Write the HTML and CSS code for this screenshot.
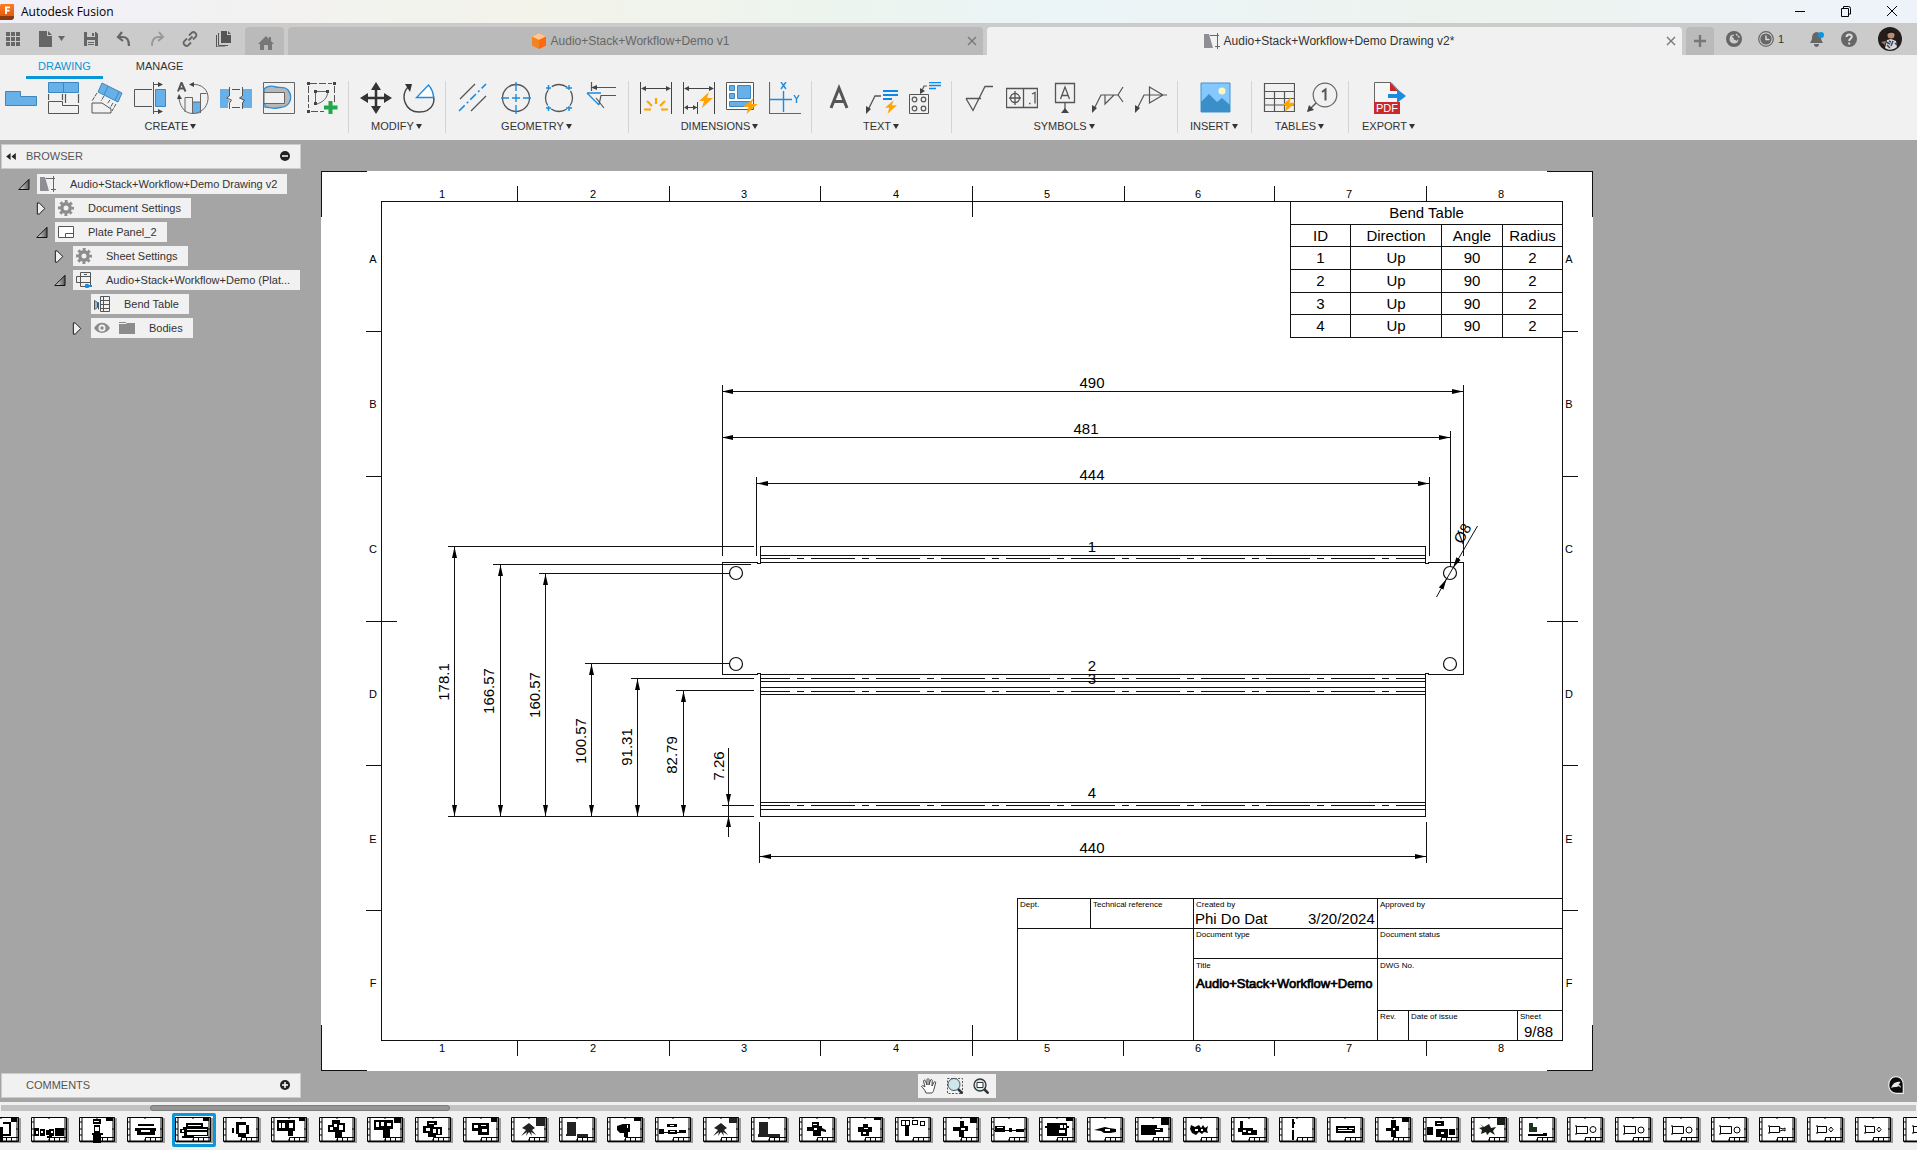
FILE: index.html
```html
<!DOCTYPE html>
<html lang="en">
<head>
<meta charset="utf-8">
<title>Autodesk Fusion</title>
<link rel="stylesheet" href="styles.css">
</head>
<body>
<svg class="defs" aria-hidden="true">
  <defs>
    <linearGradient id="tri" x1="0" y1="0" x2="1" y2="0"><stop offset="0" stop-color="#eee"/><stop offset="1" stop-color="#555"/></linearGradient>
    <linearGradient id="orange" x1="0" y1="0" x2="0" y2="1"><stop offset="0" stop-color="#ff7a1c"/><stop offset="1" stop-color="#d9540b"/></linearGradient>
    <marker id="arrow" viewBox="0 0 11 6" refX="11" refY="3" markerWidth="11" markerHeight="6" markerUnits="userSpaceOnUse" orient="auto-start-reverse"><path d="M11 3 0 .5v5z"/></marker>
    <symbol id="i-open" viewBox="0 0 12 12"><path d="M11 .8V11H.8z" fill="url(#tri)" stroke="#111"/></symbol>
    <symbol id="i-shut" viewBox="0 0 12 14"><path d="M1 1h2l6 6-6 6H1z" fill="#eee" stroke="#111"/></symbol>
    <symbol id="i-gear" viewBox="0 0 16 16"><circle cx="8" cy="8" r="4.200" fill="none" stroke="#8c8c8c" stroke-width="3.400"/><circle cx="8" cy="8" r="6.700" fill="none" stroke="#8c8c8c" stroke-width="2.600" stroke-dasharray="2.900 2.362" stroke-dashoffset="1.450"/></symbol>
    <symbol id="i-drawing" viewBox="0 0 16 16"><path d="M0 1h5l4 14H0z" fill="#8e8e93"/><path d="M6 2.500h9M13.500 0v16M11 13.500h5" fill="none" stroke="#666"/></symbol>
    <symbol id="i-bolt" viewBox="0 0 14 16"><path d="M10 0 0 9h5L3 16 14 6H8z" fill="#ffa400"/></symbol>
    <symbol id="frame" viewBox="0 0 38 26">
      <path fill="#9c9c9c" d="M1 1h37v25H1z"/><path fill="#fff" stroke="#000" d="M.5.5h35v24H.5z"/>
      <path fill="none" stroke="#000" d="M3 1v23M1 24h34M18 1v1M18 22v2M1 12h2M34 1v23M1 5h2M1 18h2M33 12h2M18.500 24v-3.500H35M23.500 21v3M28.500 21v3"/>
    </symbol>
  </defs>
</svg>

<header class="titlebar">
  <svg class="app-icon" viewBox="0 0 14 16"><path d="M1 0h13v14l-2 2H0V1z" fill="url(#orange)"/><path d="M0 12h14v2l-2 2H0z" fill="#8a3a10"/><path d="M5 2.500h5v1.700H7v1.600h2.500v1.600H7V10H5z" fill="#fff"/></svg>
  <h1>Autodesk Fusion</h1>
  <div class="window-controls">
    <button aria-label="Minimize"><svg viewBox="0 0 12 12"><path d="M1 6.500h10" stroke="#000"/></svg></button>
    <button aria-label="Restore"><svg viewBox="0 0 12 12"><path d="M3.500 3V1.500h5a2 2 0 0 1 2 2V9H9M1.500 3.500h7v8h-7z" fill="none" stroke="#000"/></svg></button>
    <button aria-label="Close"><svg viewBox="0 0 12 12"><path d="m1 1 10 10M11 1 1 11" stroke="#000"/></svg></button>
  </div>
</header>

<div class="tabbar">
  <div class="quick">
    <button aria-label="Data panel"><svg viewBox="0 0 16 16" fill="#666"><path d="M1 1h4v4H1zM6 1h4v4H6zM11 1h4v4h-4zM1 6h4v4H1zM6 6h4v4H6zM11 6h4v4h-4zM1 11h4v4H1zM6 11h4v4H6zM11 11h4v4h-4z"/></svg></button>
    <button class="file" aria-label="File"><svg viewBox="0 0 28 16" fill="#666"><path d="M1 0h8v5h5v11H1zM10 0l4 4h-4zM20 5h7l-3.500 5z"/></svg></button>
    <button aria-label="Save"><svg viewBox="0 0 16 16"><path fill="#666" fill-rule="evenodd" d="M1 1h12l2 2v12H1zM4 1v5h8V1zM4 9v6h8V9z"/><path fill="#666" d="M9 2h2v3H9zM5 11h6v1H5zM5 13h6v1H5z"/></svg></button>
    <button class="undo" aria-label="Undo"><svg viewBox="0 0 16 16"><path d="M6 1 2 6l5 4M2 6h5c5 0 6 4 6 9" fill="none" stroke="#666" stroke-width="2.200"/></svg></button>
    <button aria-label="Redo"><svg viewBox="0 0 16 16"><path d="m10 1 4 5-5 4M14 6H9c-5 0-6 4-6 9" fill="none" stroke="#999" stroke-width="2"/></svg></button>
    <button aria-label="Share"><svg viewBox="0 0 16 16"><path d="m6.500 9.500 4-4M7 4.500l3-3c2-1.500 5.500 1.500 4 4l-3 3M9 11.500l-3 3c-2 1.500-5.500-1.500-4-4l3-3" fill="none" stroke="#666" stroke-width="1.800"/></svg></button>
    <button aria-label="Copies"><svg viewBox="0 0 16 16"><path fill="#555" d="M6 0h6v4h4v8H6zM13 0l3 3h-3z"/><path d="M3.500 2v12.500H13M1.500 4v12H10" fill="none" stroke="#555"/></svg></button>
  </div>
  <button class="tab home" aria-label="Home"><svg viewBox="0 0 16 14"><path fill="#777" d="M8 0l3 3V1h2v4l3 3h-2v6h-4V9H6v5H2V8H0z"/></svg></button>
  <div class="tab">
    <button class="tab-label"><svg viewBox="0 0 16 16"><path d="m8 0 7 3.500v9L8 16l-7-3.500v-9z" fill="#f58220"/><path d="m8 0 7 3.500L8 7 1 3.500z" fill="#ffc592"/><path d="m8 7 7-3.500v9L8 16z" fill="#ff6a10"/></svg>Audio+Stack+Workflow+Demo v1</button>
    <button class="x" aria-label="Close tab"><svg viewBox="0 0 10 10"><path d="m1 1 8 8M9 1 1 9" stroke="#777" stroke-width="1.400"/></svg></button>
  </div>
  <div class="tab active">
    <button class="tab-label"><svg><use href="#i-drawing"/></svg>Audio+Stack+Workflow+Demo Drawing v2*</button>
    <button class="x" aria-label="Close tab"><svg viewBox="0 0 10 10"><path d="m1 1 8 8M9 1 1 9" stroke="#777" stroke-width="1.400"/></svg></button>
  </div>
  <button class="tab plus" aria-label="New tab"><svg viewBox="0 0 14 14"><path d="M7 1v12M1 7h12" stroke="#777" stroke-width="2.400"/></svg></button>
  <div class="account">
    <button aria-label="Extensions"><svg viewBox="0 0 16 16"><circle cx="8" cy="8" r="8" fill="#666"/><path d="M8 3.500a4.500 4.500 0 1 0 4.500 5L10 9 7.500 7z" fill="#ccc"/><path d="m8 8.500 4.500-4.500M6.500 5l4.500 4.500" stroke="#666" stroke-width="1.400"/><path d="m10 3 1.500 1.500M12 5l1.500 1.500" stroke="#ccc" stroke-width="1.500"/></svg></button>
    <button class="jobs" aria-label="Jobs"><svg viewBox="0 0 16 16"><circle cx="8" cy="8" r="7.300" fill="none" stroke="#666" stroke-width="1.200"/><circle cx="8" cy="8" r="5.600" fill="#666"/><path d="M8 4.500V8.500h3.500" fill="none" stroke="#ddd" stroke-width="1.400"/></svg>1</button>
    <button aria-label="Notifications"><svg viewBox="0 0 16 16"><path d="M7 1c4 0 5 3 5 6 0 2 1 3 2 5H1c1-2 2-3 2-5 0-3 1-5 4-6zM5 13h5c0 4-5 4-5 0z" fill="#666"/><circle cx="12" cy="4" r="3" fill="#0a96e0"/></svg></button>
    <button aria-label="Help"><svg viewBox="0 0 16 16"><circle cx="8" cy="8" r="8" fill="#666"/><path d="M5.500 6c0-3.500 5.500-3.300 5.300-.2C10.700 7.500 8.200 7.600 8.200 10M8.200 11.500v2" fill="none" stroke="#ddd" stroke-width="2"/></svg></button>
    <button class="avatar" aria-label="Profile"><svg viewBox="0 0 24 24"><circle cx="12" cy="12" r="12" fill="#241d1c"/><circle cx="13" cy="8" r="3.500" fill="#b98a76"/><path d="M9 7c0-4 8-4 8 0-3-2-5-1-8 0z" fill="#111"/><path d="m7 21 2-8 4-1 5 2 1 6c-4 3-8 4-12 1z" fill="#d5d9df"/><path d="m8 15 4 2m3-3-2 5m4-3 2 2m-10 0 3 3m-1-7 2 1" stroke="#445" stroke-width="1.500"/><path d="m3 15 5-1-1 4z" fill="#a87462"/></svg></button>
  </div>
</div>

<nav class="ribbon">
  <div class="modes"><button class="on">DRAWING</button><button>MANAGE</button></div>
  <div class="groups">
    <section class="group">
      <div class="tools">
        <button aria-label="Base view"><svg viewBox="0 0 32 32"><path d="M.5 9.500h15v5h16v9H.5z" fill="#68b0e8" stroke="#3f86bd"/></svg></button>
        <button aria-label="Projected view"><svg viewBox="0 0 32 32"><path d="M.5.500h30v10H.5zM15.500.500v10" fill="#68b0e8" stroke="#3f86bd"/><path d="M.5 12v6M30.500 12v11M14.500 12v6M17.500 12v10" fill="none" stroke="#555" stroke-width="1.200" stroke-dasharray="9 2"/><path d="M.5 19.500h14v4h16v8H.5z" fill="none" stroke="#555"/></svg></button>
        <button aria-label="Auxiliary view"><svg viewBox="0 0 32 32"><path d="m11 1 20 10-4 9L7 10zM17 4l-4 9M28 10l-4 8" fill="#68b0e8" stroke="#3f86bd"/><path d="M1 31V21h10l9 6v4z" fill="none" stroke="#555"/><path d="m6 11-5 8M13 14l-3 5M19 18l-3 4M25 22l-4 7M22 21l-3 5" fill="none" stroke="#555" stroke-dasharray="4 1"/></svg></button>
        <button aria-label="Section view"><svg viewBox="0 0 32 32"><path d="M21.500 7.500h10v17h-10z" fill="#68b0e8" stroke="#3f86bd"/><path d="M18 7.500H.5v17H18M19.500 0v32M19.500 2.500h6M19.500 29.500h6" fill="none" stroke="#555"/><path d="m24 0 5 2.500L24 5zM24 27l5 2.500-5 2.500z" fill="#444"/></svg></button>
        <button aria-label="Detail view"><svg viewBox="0 0 32 32"><path d="M15.500 20h8v11c-3 1-6 .5-8 0z" fill="#68b0e8"/><path d="M8 30V15.500h7.500V31M23.500 31V11.500h6M16 20h7M15 2.500c9-1 17 5 16 15-1 9-8 14-15 14S4 27 2 17" fill="none" stroke="#666"/><path d="m17 0-5 2.500L17 5zM0 17l2-5 3 5z" fill="#444"/><path d="M1 9.500 4.500.5l4 9M2.500 6.500h4.500" fill="none" stroke="#555" stroke-width="2"/></svg></button>
        <button aria-label="Break view"><svg viewBox="0 0 32 32"><path d="M0 7h9v7l-3 2 4 3-2 2v5H0zM32 7h-9v7l-3 2 4 3-2 2v5h10z" fill="#68b0e8"/><path d="M9.500 5v9l-3 2 5 2-2 3v6M22.500 5v9l-3 2 5 2-2 3v6M12 7.500h8M12 25.500h8" fill="none" stroke="#555"/></svg></button>
        <button aria-label="Breakout view"><svg viewBox="0 0 32 32"><path d="M.5.500h31v31H.5z" fill="none" stroke="#666"/><path d="M1 7c4-4 9-3 12-2s9-1 12 3 4 8 1 13-8 4-12 5-8-1-12-1z" fill="#b8b8b8" stroke="#2f8fd6" stroke-width="1.400"/><path d="M1 10.500h20.500v11H1z" fill="#f1f1f1" stroke="#666"/></svg></button>
        <button aria-label="Sketch"><svg viewBox="0 0 32 32"><path d="M4 1.500h22M2.500 4v22M28.500 4v16M5 29.500h13" fill="none" stroke="#555" stroke-dasharray="7 2"/><path d="M9.500 22V9.500H22C21 16 18 20 9.500 22.500" fill="none" stroke="#666"/><path d="M1 0h3v3H1zM27 0h3v3h-3zM1 28h3v3H1zM8 8h3v3H8zM20 8h3v3h-3zM8 20h3v3H8z" fill="#444"/><path d="M24.500 19v13M18 25.500h13.500" stroke="#20a84a" stroke-width="4"/></svg></button>
      </div>
      <button class="group-label">CREATE</button>
    </section>
    <section class="group">
      <div class="tools">
        <button aria-label="Move"><svg viewBox="0 0 32 32"><path d="M16 5v22M5 16h22" stroke="#333" stroke-width="2.500"/><path d="m16 0 5 8H11zM16 32l5-8H11zM0 16l8-5v10zM32 16l-8-5v10z" fill="#333"/></svg></button>
        <button aria-label="Rotate"><svg viewBox="0 0 32 32"><path d="M5 5C-3 14 2 30 16 30s19-12 11-22" fill="none" stroke="#444" stroke-width="1.400"/><path d="M2 2h7L7 10z" fill="#333"/><path d="m25.500 3-12 12.500H30.500c0-4-2-9-5-12.500z" fill="#fff" stroke="#1b8be0" stroke-width="1.300"/></svg></button>
      </div>
      <button class="group-label">MODIFY</button>
    </section>
    <section class="group">
      <div class="tools">
        <button aria-label="Centerline"><svg viewBox="0 0 32 32"><path d="M3 17 18 2M14 29l15-15" stroke="#555" stroke-width="1.300"/><path d="M2 29 29 2" stroke="#1b8be0" stroke-width="1.600" stroke-dasharray="8 3 2 3"/></svg></button>
        <button aria-label="Center mark"><svg viewBox="0 0 32 32"><circle cx="16" cy="16" r="13.500" fill="none" stroke="#555" stroke-width="1.300"/><path d="M16 0v9M16 12v8M16 23v9M1 16h8M12 16h8M23 16h8" stroke="#1b8be0" stroke-width="1.400"/></svg></button>
        <button aria-label="Center mark pattern"><svg viewBox="0 0 32 32"><circle cx="16" cy="16" r="13.500" fill="none" stroke="#555" stroke-width="1.300" stroke-dasharray="16.200 5" stroke-dashoffset="8"/><path d="M3 6h5M5.500 3v5M23 6h6M26 3v5M3 26h5M5.500 24v5M23 26h6M26 24v5" stroke="#1b8be0" stroke-width="1.400"/></svg></button>
        <button aria-label="Edge extension"><svg viewBox="0 0 32 32"><path d="M5.500 0v9M6 5.500h24M30 13.500H15l-2 9M10 16l8 10" fill="none" stroke="#555" stroke-width="1.200"/><path d="M11 3v5L5 5.500z" fill="#444"/><path d="M1 11h14M1 11l12 12" stroke="#1b8be0" stroke-width="1.400"/></svg></button>
      </div>
      <button class="group-label">GEOMETRY</button>
    </section>
    <section class="group">
      <div class="tools">
        <button aria-label="Dimension"><svg viewBox="0 0 32 32"><path d="M.5 0v32M31.500 0v32M2 6.500h28" stroke="#444"/><path d="M6 4v5L1 6.500zM26 4v5l5-2.500z" fill="#444"/><path d="M4 27.500h7M21 27.500h7M16 16v6M7 19l5 5M25 19l-5 5" stroke="#ffa400" stroke-width="2.200"/></svg></button>
        <button aria-label="Auto dimension"><svg viewBox="0 0 32 32"><path d="M.5 0v32M31.500 0v32M2 6.500h28M14.500 20v12M2 25.500h12" stroke="#444"/><path d="M6 4v5L1 6.500zM26 4v5l5-2.500zM5 23v5l-4-2.500zM10 23v5l4-2.500z" fill="#444"/><use href="#i-bolt" x="16" y="10" width="14" height="16"/></svg></button>
        <button aria-label="Arrange dimensions"><svg viewBox="0 0 32 32"><path d="M.5.500h27v27H.5z" fill="#fff" stroke="#555"/><path d="M3.500 3.500h5v5h-5zM11.500 3.500h13v13h-13zM3.500 11.500h5v5h-5zM3.500 19.500h21v5h-21z" fill="#68b0e8" stroke="#3f86bd"/><use href="#i-bolt" x="17" y="16" width="15" height="16"/></svg></button>
        <button aria-label="Ordinate"><svg viewBox="0 0 32 32"><path d="M.5 0v31.500H32" fill="none" stroke="#666" stroke-width="1.200"/><path d="M14.500 9v21M1 17.500h22M12 0l5 7M17 0l-5 7M25 13l2.500 4 2.500-4M27.500 17v4" fill="none" stroke="#1b8be0" stroke-width="1.400"/></svg></button>
      </div>
      <button class="group-label">DIMENSIONS</button>
    </section>
    <section class="group">
      <div class="tools">
        <button aria-label="Text"><svg viewBox="0 0 32 32"><path d="m8 26 8-20 8 20M11 19.500h10" fill="none" stroke="#555" stroke-width="3"/></svg></button>
        <button aria-label="Leader"><svg viewBox="0 0 32 32"><path d="m1 30 8-16h6" fill="none" stroke="#555" stroke-width="1.300"/><path d="M0 32v-8l5 3z" fill="#444"/><path d="M17 9h15M17 13h15M17 17h9" stroke="#0a8ae6" stroke-width="2"/><use href="#i-bolt" x="19" y="18" width="12" height="14"/></svg></button>
        <button aria-label="Hole note"><svg viewBox="0 0 32 32"><path d="M.5 12.500h19v19H.5z" fill="none" stroke="#555"/><g fill="none" stroke="#555" stroke-width="1.200"><circle cx="5.500" cy="17.500" r="2.300"/><circle cx="14.500" cy="17.500" r="2.300"/><circle cx="5.500" cy="26.500" r="2.300"/><circle cx="14.500" cy="26.500" r="2.300"/><path d="M12 11l3-7h3"/></g><path d="M11 12V6l5 3z" fill="#444"/><path d="M20 .7h12M20 3.500h12M20 6.500h7" stroke="#0a8ae6" stroke-width="1.300"/></svg></button>
      </div>
      <button class="group-label">TEXT</button>
    </section>
    <section class="group">
      <div class="tools">
        <button aria-label="Surface texture"><svg viewBox="0 0 32 32"><path d="M3 16.500h15M3 16.500l7 12L22 4.500h8" fill="none" stroke="#555" stroke-width="1.300"/></svg></button>
        <button aria-label="Feature control frame"><svg viewBox="0 0 32 32"><path d="M.5 6.500h31v19H.5zM17.500 6.500v19M9 9v14M3 16h12M23 21.500h1.500M26 12l3-1.500v11" fill="none" stroke="#555" stroke-width="1.300"/><circle cx="9" cy="16" r="4.500" fill="none" stroke="#555" stroke-width="1.300"/></svg></button>
        <button aria-label="Datum"><svg viewBox="0 0 32 32"><path d="M6.500 1.500h19v19h-19zM16 21v8M11.500 17 16 5l4.500 12M13 13.500h6" fill="none" stroke="#555" stroke-width="1.300"/><path d="m16 26 4 5h-8z" fill="#444"/></svg></button>
        <button aria-label="Welding"><svg viewBox="0 0 32 32"><path d="m1 29 8-16h18M13 13v9l9-9M31 5l-5 8 5 7" fill="none" stroke="#555" stroke-width="1.200"/><path d="M0 31v-8l5 3z" fill="#444"/></svg></button>
        <button aria-label="Taper"><svg viewBox="0 0 32 32"><path d="m1 29 8-16h23M14.500 5v16L28 13z" fill="none" stroke="#555" stroke-width="1.200"/><path d="M0 31v-8l5 3z" fill="#444"/></svg></button>
      </div>
      <button class="group-label">SYMBOLS</button>
    </section>
    <section class="group">
      <div class="tools">
        <button aria-label="Insert image"><svg viewBox="0 0 32 32"><path d="M2 1h29v29H2z" fill="#84c8ff" stroke="#3f93cf"/><path d="m2 20 8-8 8 8 5-4 8 7v7H2z" fill="#3a8fc9"/><circle cx="23" cy="9" r="3.500" fill="#fff5b8"/></svg></button>
      </div>
      <button class="group-label">INSERT</button>
    </section>
    <section class="group">
      <div class="tools">
        <button aria-label="Table"><svg viewBox="0 0 32 32"><path d="M1.500 1.500h30v28h-30zM1.500 9.500h30M1.500 16.500h30M1.500 23h30M11.500 9.500v20M21.500 9.500v20" fill="none" stroke="#555" stroke-width="1.200"/><use href="#i-bolt" x="19" y="15" width="13" height="15"/></svg></button>
        <button aria-label="Balloon"><svg viewBox="0 0 32 32"><circle cx="19" cy="13" r="11.800" fill="none" stroke="#666" stroke-width="1.200"/><path d="m16 10 3.500-2.500v11" fill="none" stroke="#555" stroke-width="2"/><path d="m10 21-8 8" stroke="#555" stroke-width="1.400"/><path d="m1 30 2-7 5 5z" fill="#444"/></svg></button>
      </div>
      <button class="group-label">TABLES</button>
    </section>
    <section class="group">
      <div class="tools">
        <button aria-label="Export PDF"><svg viewBox="0 0 32 32"><path d="M.5.500H17L24 8v13H.5z" fill="#f6f6f6" stroke="#666"/><path d="m16 0 8 9h-8z" fill="#c9282d"/><path d="M0 20h26v12H0z" fill="#c9282d"/><path d="M14 12h9V7l9 7-9 7v-5h-9z" fill="#1b8be0"/><text x="13" y="30" class="pdf">PDF</text></svg></button>
      </div>
      <button class="group-label">EXPORT</button>
    </section>
  </div>
</nav>

<main class="stage">
  <aside class="browser">
    <div class="panel">
      <svg class="rewind" viewBox="0 0 11 8"><path d="M5 0v8L0 4zM11 0v8L6 4z" fill="#222"/></svg>
      <h2>BROWSER</h2>
      <button aria-label="Collapse"><svg viewBox="0 0 10 10"><circle cx="5" cy="5" r="5" fill="#222"/><path d="M2 5h6" stroke="#fff" stroke-width="1.500"/></svg></button>
    </div>
    <ul class="tree">
      <li><div class="row"><svg class="twist"><use href="#i-open"/></svg><a href="#"><svg><use href="#i-drawing"/></svg>Audio+Stack+Workflow+Demo Drawing v2</a></div>
        <ul>
          <li><div class="row"><svg class="twist"><use href="#i-shut"/></svg><a href="#"><svg><use href="#i-gear"/></svg>Document Settings</a></div></li>
          <li><div class="row"><svg class="twist"><use href="#i-open"/></svg><a href="#"><svg viewBox="0 0 16 16"><path d="M.5 2.500h15v11H.5zM7.500 13.500v-4h8" fill="#fff" stroke="#555"/></svg>Plate Panel_2</a></div>
            <ul>
              <li><div class="row"><svg class="twist"><use href="#i-shut"/></svg><a href="#"><svg><use href="#i-gear"/></svg>Sheet Settings</a></div></li>
              <li><div class="row"><svg class="twist"><use href="#i-open"/></svg><a href="#"><svg viewBox="0 0 16 16"><path d="M4.500.500h10v14h-10zM.500 4.500h14M.500 4.500v6h14M8 2.500h3" fill="none" stroke="#555"/><circle cx="11" cy="14" r="2.300" fill="#1b8be0"/><path d="M11 14h5" stroke="#1b8be0" stroke-width="2"/></svg>Audio+Stack+Workflow+Demo (Plat...</a></div>
                <ul>
                  <li><div class="row"><a href="#"><svg viewBox="0 0 16 16"><path d="M6.500.500h9v15h-9zM6.500 4.500h9M6.500 8.500h9M6.500 12.500h9M9.500 1v15M.500 4.500v9l3-2v-5zM3.500 6.500h1v7" fill="none" stroke="#555"/><path d="M2 6v6" stroke="#1b8be0"/></svg>Bend Table</a></div></li>
                  <li><div class="row"><svg class="twist"><use href="#i-shut"/></svg><a href="#"><svg class="eye" viewBox="0 0 16 16"><path fill="#8c8c8c" fill-rule="evenodd" d="M0 8c4-7 12-7 16 0-4 6.500-12 6.500-16 0zM8 4.500a3.500 3.500 0 1 0 0 7 3.500 3.500 0 0 0 0-7z"/><circle cx="8" cy="8" r="1.700" fill="#8c8c8c"/></svg><svg viewBox="0 0 16 16"><path d="M0 2h7v1H0zM0 4h7l1-1h8v11H0z" fill="#8c8c8c"/></svg>Bodies</a></div></li>
                </ul>
              </li>
            </ul>
          </li>
        </ul>
      </li>
    </ul>
  </aside>

  <svg class="sheet" viewBox="321 171 1272 900">
    <path class="ln" d="M321.500 217v-45.500H367M1547 171.500h45.500V217M1592.500 1025v45.500H1547M367 1070.500h-45.500V1025"/>
    <path class="ln" d="M381.500 201.500h1181v839h-1181zM517.500 186v15M669.500 186v15M820.500 186v15M972.500 186v31M1124.500 186v15M1274.500 186v15M1426.500 186v15M517.500 1041v15M669.500 1041v15M820.500 1041v15M972.500 1025v31M1123.500 1041v15M1274.500 1041v15M1426.500 1041v15M366 331.500h15M366 476.500h15M366 621.500h31M366 765.500h15M366 910.500h15M1563 331.500h15M1563 476.500h15M1547 621.500h31M1563 765.500h15M1563 910.500h15"/>
    <g class="zone">
      <text x="442" y="198">1</text><text x="593" y="198">2</text><text x="744" y="198">3</text><text x="896" y="198">4</text><text x="1047" y="198">5</text><text x="1198" y="198">6</text><text x="1349" y="198">7</text><text x="1501" y="198">8</text>
      <text x="442" y="1052">1</text><text x="593" y="1052">2</text><text x="744" y="1052">3</text><text x="896" y="1052">4</text><text x="1047" y="1052">5</text><text x="1198" y="1052">6</text><text x="1349" y="1052">7</text><text x="1501" y="1052">8</text>
      <text x="373" y="263">A</text><text x="373" y="408">B</text><text x="373" y="553">C</text><text x="373" y="698">D</text><text x="373" y="843">E</text><text x="373" y="987">F</text>
      <text x="1569" y="263">A</text><text x="1569" y="408">B</text><text x="1569" y="553">C</text><text x="1569" y="698">D</text><text x="1569" y="843">E</text><text x="1569" y="987">F</text>
    </g>

    <!-- flat pattern outline and bend edges -->
    <path class="ln" d="M722.500 562.500h35v1h3v-17h665v17h3v-1h35v112h-35v-1h-3v143h-665v-143h-3v1h-35zM760 555.500h665M760 562.500h665M760 674.500h665M760 681.500h665M760 687.500h665M760 694.500h665M760 802.500h665M760 809.500h665"/>
    <path class="ln bend" d="M760 558.500h665M760 678.500h665M760 691.500h665M760 805.500h665"/>
    <g class="hole"><circle cx="736" cy="573" r="6.500"/><circle cx="736" cy="664" r="6.500"/><circle cx="1450" cy="573" r="6.500"/><circle cx="1450" cy="664" r="6.500"/></g>

    <!-- extension lines -->
    <path class="ln" d="M448 546.500h306M493 564.500h258M539 573.500h190M585 663.500h144M631 678.500h123M676 690.500h78M722 805.500h32M448 816.500h306M722.500 385v171M1463.500 385v171M1450.500 431v136M756.500 477v79M1429.500 477v79M759.500 822v41M1426.500 822v41"/>
    <!-- dimension lines -->
    <g class="dim">
      <path d="M454.500 547v269"/><path d="M500.500 565v251"/><path d="M545.500 574v242"/><path d="M591.500 664v152"/><path d="M637.500 679v137"/><path d="M683.500 691v125"/>
      <path class="in" d="M728.500 748v57"/><path class="in" d="M728.500 837v-21"/>
      <path d="M722 391.500h741"/><path d="M722 437.500h728"/><path d="M757 483.500h672"/><path d="M760 856.500h666"/>
      <path class="in" d="m1477.500 526-24.500 42"/><path class="in" d="m1436.500 597 10-18"/>
    </g>
    <path class="thin" d="m1453 568-7 12M728.500 805v11"/>
    <g class="num">
      <text x="1092" y="388">490</text><text x="1086" y="434">481</text><text x="1092" y="480">444</text><text x="1092" y="853">440</text>
      <text x="1092" y="552">1</text><text x="1092" y="671">2</text><text x="1092" y="684">3</text><text x="1092" y="798">4</text>
      <text transform="translate(449 682) rotate(-90)">178.1</text><text transform="translate(494 691) rotate(-90)">166.57</text><text transform="translate(540 695) rotate(-90)">160.57</text><text transform="translate(586 741) rotate(-90)">100.57</text><text transform="translate(632 747) rotate(-90)">91.31</text><text transform="translate(677 755) rotate(-90)">82.79</text><text transform="translate(724 766) rotate(-90)">7.26</text>
      <text transform="translate(1467 536) rotate(-60)">Ø8</text>
    </g>

    <foreignObject x="1290" y="201" width="274" height="140">
      <table class="bend-table">
        <colgroup><col class="c-id"><col class="c-dir"><col class="c-ang"><col class="c-rad"></colgroup>
        <thead>
          <tr><th colspan="4">Bend Table</th></tr>
          <tr><th>ID</th><th>Direction</th><th>Angle</th><th>Radius</th></tr>
        </thead>
        <tbody>
          <tr><td>1</td><td>Up</td><td>90</td><td>2</td></tr>
          <tr><td>2</td><td>Up</td><td>90</td><td>2</td></tr>
          <tr><td>3</td><td>Up</td><td>90</td><td>2</td></tr>
          <tr><td>4</td><td>Up</td><td>90</td><td>2</td></tr>
        </tbody>
      </table>
    </foreignObject>

    <!-- title block -->
    <path class="ln" d="M1017.500 1040v-141.500h545M1017 928.500h545M1193 958.500h369M1377 1010.500h185M1090.500 899v29M1193.500 899v141M1377.500 899v141M1408.500 1011v29M1517.500 1011v29"/>
    <g class="cap">
      <text x="1020" y="907">Dept.</text><text x="1093" y="907">Technical reference</text><text x="1196" y="907">Created by</text><text x="1380" y="907">Approved by</text>
      <text x="1196" y="937">Document type</text><text x="1380" y="937">Document status</text><text x="1196" y="968">Title</text><text x="1380" y="968">DWG No.</text>
      <text x="1380" y="1019">Rev.</text><text x="1411" y="1019">Date of issue</text><text x="1520" y="1019">Sheet</text>
    </g>
    <g class="val">
      <text x="1195" y="924">Phi Do Dat</text><text x="1308" y="924">3/20/2024</text><text x="1524" y="1037">9/88</text>
      <text x="1196" y="988" class="name">Audio+Stack+Workflow+Demo</text>
    </g>
  </svg>

  <div class="panel comments">
    <h2>COMMENTS</h2>
    <button aria-label="Expand comments"><svg viewBox="0 0 10 10"><circle cx="5" cy="5" r="5" fill="#222"/><path d="M2 5h6M5 2v6" stroke="#fff" stroke-width="1.500"/></svg></button>
  </div>
  <div class="viewbar">
    <button aria-label="Pan"><svg viewBox="0 0 16 16"><path d="M5 15c-1-3-3-5-4.500-6.500C1 7 3 8 4 9L2.500 3c.5-1.500 1.500-1 2 0L6 7V1.500c.5-1.200 1.700-1 2 0V7l1.500-5c.7-1 1.700-.5 1.700.5L11 8l2-4c1-.8 2 0 1.600 1L13 11c-.3 2-1 3-2 4z" fill="#fff" stroke="#333" stroke-width=".9"/></svg></button>
    <button aria-label="Zoom window"><svg viewBox="0 0 16 16"><path d="M.500.500h15v15H.500z" fill="none" stroke="#555" stroke-dasharray="2 1.500"/><circle cx="7" cy="6.500" r="6" fill="#cfe6ea" stroke="#456"/><path d="m11 11 4.500 4.500" stroke="#333" stroke-width="2.500"/></svg></button>
    <button aria-label="Fit"><svg viewBox="0 0 16 16"><circle cx="7" cy="7" r="6" fill="#cfe6ea" stroke="#333" stroke-width="1.300"/><path d="M4 4.500h6v5H4z" fill="#fff" stroke="#333"/><path d="m11 11 4.500 4.500" stroke="#333" stroke-width="2.500"/></svg></button>
  </div>
  <button class="badge" aria-label="Assistant"><svg viewBox="0 0 16 18"><path d="M8 .700c5 0 7.300 4 7.300 8v8.600H8C3 17.300.700 13 .700 9S3 .700 8 .700z" fill="#0a0a0a" stroke="#eee" stroke-width="1.200"/><path d="M3 12c2-5 5-7 9.500-6l-2 3c2 0 2.500 1 2 3-1-2-2-2-4-1-2 0-4 0-5.500 1z" fill="#e8e8e8"/></svg></button>
</main>

<footer class="sheets">
  <div class="track"><div class="grip"></div></div>
  <div class="strip">
    <button><svg viewBox="0 0 38 26"><use href="#frame"/><path d="M20 5h8v2h-8zM26 5h2v14H16v-2h10zM28 1h6v4h-6zM16 10h4v14h-4z"/></svg></button>
    <button><svg viewBox="0 0 38 26"><use href="#frame"/><path d="M3 11h5v8H3zM9 12h5v7H9zM15 13h4v5h-4zM18 12h5v7h-5zM24 11h9v8h-9zM16 19h5v2h-5z"/><path d="M5 14h2v3H5zM10 14h2v2h-2zM20 14h2v2h-2z" fill="#fff"/></svg></button>
    <button><svg viewBox="0 0 38 26"><use href="#frame"/><path d="M14 2h8v5h-8zM15 8h6v8h-6zM13 16h11v2H13zM14 17h8v9h-8zM27 1h7v3h-7z"/><path d="M16 10h4v4h-4zM15 4h5v1h-5z" fill="#fff"/></svg></button>
    <button><svg viewBox="0 0 38 26"><use href="#frame"/><path d="M11 7h16v2H11zM8 11h21v3H8zM10 14h18v4H10z"/><path d="M14 13h9v2h-9z" fill="#fff"/></svg></button>
    <button class="current"><svg viewBox="0 0 38 26"><use href="#frame"/><path d="M11 6h17v4h5v9H9v-3H5v-4h3v-2h3zM28 1h6v3h-6zM7 19h12v2H7z"/><path d="M12 12h20v1H12zM12 15h20v3H12zM7 13h2v2H7zM13 8h13v1H13z" fill="#fff"/></svg></button>
    <button><svg viewBox="0 0 38 26"><use href="#frame"/><path d="M13 5h10v3h3v9h-3v3h-8v-3h-2zM9 11h2v5H9z"/><path d="M16 8h7v8h-7z" fill="#fff"/></svg></button>
    <button><svg viewBox="0 0 38 26"><use href="#frame"/><path d="M6 3h18v11h-2v5h-5v-5H6zM28 1h6v3h-6z"/><path d="M8 6h2v5H8zM11 6h3v5h-3zM18 6h4v5h-4z" fill="#fff"/></svg></button>
    <button><svg viewBox="0 0 38 26"><use href="#frame"/><path d="M13 3h8v3h5v9h-3v6h-7v-6H9V8h4z"/><path d="M15 7h3v3h-3zM20 8h4v5h-4zM11 10h3v3h-3z" fill="#fff"/></svg></button>
    <button><svg viewBox="0 0 38 26"><use href="#frame"/><path d="M7 3h19v9h-3v9h-7v-8H7zM27 1h7v5h-7z"/><path d="M9 5h3v5H9zM14 5h3v4h-3zM20 6h4v3h-4z" fill="#fff"/></svg></button>
    <button><svg viewBox="0 0 38 26"><use href="#frame"/><path d="M12 4h10v4h-3v2h8v8h-6v2h-8v-4H8V9h4z"/><path d="M14 6h5v1h-5zM11 11h4v3h-4zM18 12h3v4h-3zM23 12h2v5h-2z" fill="#fff"/></svg></button>
    <button><svg viewBox="0 0 38 26"><use href="#frame"/><path d="M9 6h17v12H15v-4H9zM28 1h6v4h-6z"/><path d="M11 8h4v3h-4zM18 8h5v1h-5zM19 12h5v3h-5z" fill="#fff"/></svg></button>
    <button><svg viewBox="0 0 38 26"><use href="#frame"/><path d="m18 6 6 5-3 2 4 5-5-3 1 4-3-4-3 4 1-4-6 4 5-6-4-2zM25 1h9v8h-9z" fill="#222"/></svg></button>
    <button><svg viewBox="0 0 38 26"><use href="#frame"/><path d="M8 5h9v12H8zM7 17h10v2H7zM18 17h11v3H18z" fill="#222"/></svg></button>
    <button><svg viewBox="0 0 38 26"><use href="#frame"/><path d="m10 9 6-2h7v8h-2v5h-4v-4h-4l-3-3zM27 1h7v3h-7z"/><path d="M20 8h1v3h-1z" fill="#fff"/></svg></button>
    <button><svg viewBox="0 0 38 26"><use href="#frame"/><path d="M4 12h5v5H4zM12 7h10v3H12zM13 13h9v4h-9zM9 15h16v1H9zM24 13h7v3h-7z"/><path d="M15 8h4v1h-4zM15 14h5v1h-5z" fill="#fff"/></svg></button>
    <button><svg viewBox="0 0 38 26"><use href="#frame"/><path d="m18 6 6 5-3 2 4 5-5-3 1 4-3-4-3 4 1-4-6 4 5-6-4-2zM26 1h8v5h-8z" fill="#222"/></svg></button>
    <button><svg viewBox="0 0 38 26"><use href="#frame"/><path d="M8 5h9v12H8zM7 17h22v3H7z" fill="#222"/></svg></button>
    <button><svg viewBox="0 0 38 26"><use href="#frame"/><path d="M13 5h7v4h3v2l4 2v2l-5-1v5h-8v-5H8v-4h5z"/><path d="M15 11h3v2h-3zM14 7h4v1h-4z" fill="#fff"/></svg></button>
    <button><svg viewBox="0 0 38 26"><use href="#frame"/><path d="M16 7h5v3h4v5h-3v4h-8v-4h-3v-5h5zM27 1h7v2h-7z"/><path d="M17 11h4v1h-4zM16 15h3v2h-3z" fill="#fff"/></svg></button>
    <button><svg viewBox="0 0 38 26"><use href="#frame"/><path d="M6 3h9v6h-1v10h-4V9H6zM17 3h6v5h-6zM25 4h5v5h-5z"/><path d="M7 4h3v4H7zM11 4h3v4h-3zM18 4h4v3h-4zM26 5h3v3h-3z" fill="#fff"/></svg></button>
    <button><svg viewBox="0 0 38 26"><use href="#frame"/><path d="M17 4h4v5h4v5h-4v6h-5v-6h-6v-4h7zM27 1h7v5h-7z"/><path d="M18 11h4v2h-4z" fill="#fff"/></svg></button>
    <button><svg viewBox="0 0 38 26"><use href="#frame"/><path d="M4 9h10v6H4zM3 13h30v1H3zM18 11h3v4h-3zM25 12h8v3h-8z"/><path d="M6 10h6v1H6z" fill="#fff"/></svg></button>
    <button><svg viewBox="0 0 38 26"><use href="#frame"/><path d="M8 6h20v13H8zM6 9h24v2H6zM27 1h7v3h-7z"/><path d="M21 8h3v3h-3zM20 13h6v3h-6zM25 8h2v3h-2z" fill="#fff"/></svg></button>
    <button><svg viewBox="0 0 38 26"><use href="#frame"/><path d="m7 13 7-2 4-1 4 1 7 1v3l-6 1h-6l-3-2z"/><path d="M18 12h5v2h-5z" fill="#fff"/></svg></button>
    <button><svg viewBox="0 0 38 26"><use href="#frame"/><path d="M6 8h16v3h6v4h-7v3H6zM26 1h8v7h-8z"/><path d="M20 12h5v1h-5z" fill="#fff"/></svg></button>
    <button><svg viewBox="0 0 38 26"><use href="#frame"/><path d="m8 8 4 2 4-2 2 3 2-3 2 3 3-2-1 4 1 3-4-1-2 2-3-2-3 3-4-2-2-4z"/><path d="M12 12h3v2h-3zM18 12h2v2h-2z" fill="#fff"/></svg></button>
    <button><svg viewBox="0 0 38 26"><use href="#frame"/><path d="M9 4h3v7h10v2h4v5H11v-3H7v-4h2z"/><path d="M12 13h3v2h-3zM17 14h3v2h-3z" fill="#fff"/></svg></button>
    <button><svg viewBox="0 0 38 26"><use href="#frame"/><path d="M13 2h2v9h-2zM13 13h2v10h-2zM14 5h2v2h-2z"/></svg></button>
    <button><svg viewBox="0 0 38 26"><use href="#frame"/><path d="M9 9h19v7H9z"/><path d="M11 11h9v1h-9zM11 13h14v1H11zM22 11h5v1h-5z" fill="#fff"/></svg></button>
    <button><svg viewBox="0 0 38 26"><use href="#frame"/><path d="M16 3h5v6h3v5h-3v6h-5v-6h-5v-3h5zM27 1h7v4h-7z"/><path d="M18 11h2v2h-2z" fill="#fff"/></svg></button>
    <button><svg viewBox="0 0 38 26"><use href="#frame"/><path d="M12 4h9v5h-9zM4 10h6v8H4zM13 12h12v8H13zM26 12h6v6h-6z"/><path d="M14 6h4v1h-4zM18 15h3v2h-3z" fill="#fff"/></svg></button>
    <button><svg viewBox="0 0 38 26"><use href="#frame"/><path d="m9 7 4 3 5-3 2 4 5-1-3 4 2 4-5-3-3 3-1-3-5 2 1-4-3-2 4-1zM26 1h8v7h-8z" fill="#182018"/></svg></button>
    <button><svg viewBox="0 0 38 26"><use href="#frame"/><path d="M10 6h4v4h4v5h-8z" fill="#1c331d"/><path d="M9 17h15v-1h4v3H9z"/></svg></button>
    <button><svg viewBox="0 0 38 26"><use href="#frame"/><g class="o"><path d="M9.500 9.500h11v7h-11zM8 9h2M8 17h2"/><circle cx="26" cy="12.500" r="3"/></g></svg></button>
    <button><svg viewBox="0 0 38 26"><use href="#frame"/><g class="o"><path d="M9.500 9.500h11v7h-11zM8 9h2M8 17h2"/><circle cx="26" cy="13" r="3"/></g></svg></button>
    <button><svg viewBox="0 0 38 26"><use href="#frame"/><g class="o"><path d="M9.500 9.500h11v7h-11zM8 9h2M8 17h2"/><circle cx="26" cy="13" r="3"/></g></svg></button>
    <button><svg viewBox="0 0 38 26"><use href="#frame"/><g class="o"><path d="M9.500 9.500h11v7h-11zM8 9h2M8 17h2"/><circle cx="26" cy="13" r="3"/></g></svg></button>
    <button><svg viewBox="0 0 38 26"><use href="#frame"/><g class="o"><path d="M10.500 9.500h10v6h-10zM9 9h2M9 16h2M21 11l3 1 2-1v3l-2-1-3 1"/></g></svg></button>
    <button><svg viewBox="0 0 38 26"><use href="#frame"/><g class="o"><path d="M10.500 9.500h9v6h-9zM9 9h2M9 16h2M24 10l2 2.500-2 2.500-2-2.500z"/></g></svg></button>
    <button><svg viewBox="0 0 38 26"><use href="#frame"/><g class="o"><path d="M10.500 9.500h9v6h-9zM9 9h2M9 16h2M24 10l2 2.500-2 2.500-2-2.500z"/></g></svg></button>
    <button><svg viewBox="0 0 38 26"><use href="#frame"/><g class="o"><path d="M10.500 9.500h9v6h-9zM9 9h2M9 16h2M24 10l2 2.500-2 2.500-2-2.500z"/></g></svg></button>
  </div>
</footer>
</body>
</html>
```
FILE: styles.css
```css
* { box-sizing: border-box; }
body {
  margin: 0;
  min-height: 100vh;
  display: flex;
  flex-direction: column;
  overflow: hidden;
  background: #f1f1f1;
  color: #333;
  font: 11px/14px "Liberation Sans", Arial, sans-serif;
}
button {
  margin: 0;
  padding: 0;
  border: 0;
  background: none;
  color: inherit;
  font: inherit;
}
svg { display: block; flex: none; }
h1, h2 { margin: 0; font-weight: normal; }
ul { margin: 0; padding: 0; list-style: none; }
.defs { position: absolute; width: 0; height: 0; }

/* Title bar */
.titlebar {
  display: flex;
  align-items: center;
  height: 23px;
  background: linear-gradient(90deg, #f1f0f8, #f3f3ea 28%, #edf4ee 42%, #ebf4f7 56%, #edf3ee 78%, #eef3fb);
}
.app-icon { width: 14px; height: 16px; }
.titlebar h1 {
  margin-left: 7px;
  color: #000;
  font: 12px/20px "Open Sans", "Noto Sans", sans-serif;
}
.window-controls { display: flex; gap: 34px; margin-left: auto; padding: 0 19px 2px 0; }
.window-controls svg { width: 12px; height: 12px; }

/* Document tabs */
.tabbar {
  display: flex;
  align-items: flex-end;
  gap: 4px;
  height: 32px;
  background: #cbcbcb;
}
.quick {
  display: flex;
  align-items: center;
  gap: 17px;
  width: 241px;
  height: 32px;
  padding: 0 0 0 5px;
}
.quick svg { width: 16px; height: 16px; }
.quick .file svg { width: 28px; }
.tab {
  display: flex;
  flex: 1;
  align-items: center;
  height: 28px;
  padding: 0 5px 0 6px;
  border-radius: 4px 4px 0 0;
  background: #bababa;
  color: #666;
  font-size: 12px;
}
.tab.active { background: #f1f1f1; color: #333; }
.tab-label { display: flex; flex: 1; align-items: center; justify-content: center; gap: 4px; }
.tab-label svg { width: 16px; height: 16px; }
.x svg { width: 12px; height: 10px; }
.tab.home, .tab.plus { flex: none; justify-content: center; padding: 0; }
.tab.home { width: 39px; }
.home svg { width: 16px; height: 14px; margin: 4px 0 0 2px; }
.tab.plus { width: 28px; }
.plus svg { width: 14px; height: 14px; }
.account {
  display: flex;
  align-items: center;
  gap: 16px;
  width: 199px;
  height: 32px;
  padding: 0 0 0 8px;
}
.account svg { width: 16px; height: 16px; }
.account .jobs { display: flex; gap: 4px; align-items: center; margin-right: 9px; }
.account .avatar { margin-left: 5px; }
.account .avatar svg { width: 24px; height: 24px; }

/* Ribbon */
.ribbon { height: 85px; background: #f1f1f1; }
.modes { display: flex; gap: 21px; height: 24px; padding-left: 26px; }
.modes button { padding: 0 12px; border-bottom: 3px solid transparent; }
.modes .on { border-color: #0a96d7; color: #0a96d7; }
.groups { display: flex; margin-top: 2px; }
.group {
  display: flex;
  flex-direction: column;
  align-items: center;
  min-width: 74px;
  height: 52px;
  padding: 1px 10px 0 11px;
  border-right: 1px solid #d4d4d4;
}
.group:first-child { padding-left: 5px; }
.group:last-child { border: 0; min-width: 80px; }
.tools { display: flex; gap: 11px; }
.tools svg { width: 32px; height: 32px; }
.pdf { fill: #fff; font-size: 11px; text-anchor: middle; }
.group-label { display: flex; align-items: center; gap: 2px; margin: 5px 2px 0 0; }
.group-label::after {
  content: "";
  border: 3px solid transparent;
  border-top: 5px solid #333;
  border-bottom: 0;
}

/* Canvas */
.stage {
  position: relative;
  flex: 1;
  display: flex;
  align-items: center;
  justify-content: center;
  padding-right: 3px;
  background: #a5a5a5;
}
.sheet {
  height: calc(100vh - 250px);
  aspect-ratio: 1272 / 900;
  background: #fff;
  font-family: "Liberation Sans", Arial, sans-serif;
}
.sheet text { fill: #000; }
.ln { fill: none; stroke: #111; shape-rendering: crispEdges; }
.bend { stroke-dasharray: 44 7 7 7; stroke-dashoffset: 14; }
.hole { fill: none; stroke: #111; stroke-width: 1.2; }
.dim path { fill: none; stroke: #111; marker-start: url(#arrow); marker-end: url(#arrow); }
.dim .in { marker-start: none; }
.thin { fill: none; stroke: #111; }
.zone { font-size: 11px; text-anchor: middle; }
.num { font-size: 15px; text-anchor: middle; }
.cap { font-size: 8px; }
.val { font-size: 15px; }
.name { font-size: 13px; stroke: #000; stroke-width: .7; }
.bend-table {
  width: 273px;
  border-collapse: collapse;
  table-layout: fixed;
  color: #000;
  font-size: 15px;
  line-height: 18px;
  text-align: center;
}
.bend-table tr { height: 23px; }
.bend-table thead tr:last-child, .bend-table tbody tr:nth-child(3) { height: 22px; }
.bend-table th, .bend-table td { padding: 0; border: 1px solid #111; font-weight: normal; }
.c-id { width: 60px; }
.c-dir { width: 91px; }
.c-ang { width: 61px; }
.c-rad { width: 60px; }

/* Browser and comments panels */
.browser { position: absolute; left: 1px; top: 4px; width: 300px; }
.panel {
  display: flex;
  align-items: center;
  height: 25px;
  padding: 0 10px 1px 4px;
  border: 1px solid #ccc;
  background: #f1f1f1;
  color: #555;
}
.panel h2 { flex: 1; font-size: 11px; line-height: 14px; }
.panel button svg { width: 10px; height: 10px; }
.rewind { width: 10px; height: 7px; margin-right: 10px; }
.comments { position: absolute; left: 1px; bottom: 4px; width: 300px; padding-left: 24px; }
.tree { padding: 5px 0 0 17px; }
.tree ul { padding-left: 18px; }
.row { display: flex; align-items: center; height: 20px; margin-bottom: 4px; }
.row a {
  display: flex;
  align-items: center;
  gap: 14px;
  height: 20px;
  padding: 0 10px 0 3px;
  background: #f1f1f1;
  color: #333;
  text-decoration: none;
  white-space: nowrap;
}
.row a:first-child { margin-left: 19px; }
.row a svg { width: 16px; height: 16px; }
.row a .eye { margin-right: -5px; }
.twist { width: 12px; height: 13px; margin-right: 7px; }
.viewbar {
  position: absolute;
  bottom: 4px;
  left: calc(50% - 41px);
  display: flex;
  gap: 10px;
  height: 24px;
  width: 78px;
  padding: 4px 3px;
  background: #f1f1f1;
}
.viewbar svg { width: 16px; height: 16px; }
.badge { position: absolute; right: 13px; bottom: 8px; }
.badge svg { width: 16px; height: 18px; }

/* Sheet strip */
.sheets { height: 48px; padding-top: 3px; background: #f0f0f0; overflow: hidden; }
.track { display: flex; height: 6px; margin: 0 1px; padding-left: 149px; background: #c2c2c4; }
.grip { width: 17%; height: 6px; border: 1px solid #7c7c7c; border-radius: 3px; background: #959595; }
.strip { display: flex; gap: 4px; margin: 2px 0 0 -20px; }
.strip button { flex: none; width: 44px; height: 34px; padding: 1px 0; border: 3px solid transparent; border-radius: 2px; }
.strip .current { border-color: #0a96d7; }
.strip svg { width: 38px; height: 26px; }
.o { fill: none; stroke: #000; }
```
